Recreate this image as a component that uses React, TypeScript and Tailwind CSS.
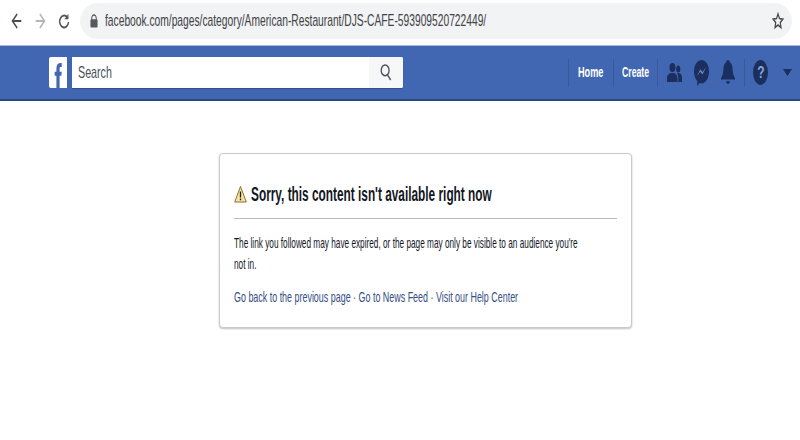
export default function App() {
  return (
    <div className="w-[800px] h-[440px] bg-white overflow-hidden font-['Liberation_Sans',sans-serif]">
      {/* browser bar */}
      <div className="h-[45px] flex items-center pl-[11px] pr-[8px] pb-[3px]">
        <svg width="11" height="16" viewBox="0 0 16 16" preserveAspectRatio="none" fill="none" stroke="#4a4d52" strokeWidth="1.8" className="shrink-0">
          <path d="M15 8H2M9 1L2 8l7 7" />
        </svg>
        <svg width="11" height="16" viewBox="0 0 16 16" preserveAspectRatio="none" fill="none" stroke="#b3b5b8" strokeWidth="1.8" className="shrink-0 ml-[13px]">
          <path d="M1 8h13M7 1l7 7-7 7" />
        </svg>
        <svg width="12" height="16" viewBox="0 0 16 16" preserveAspectRatio="none" fill="none" stroke="#55585c" strokeWidth="2" className="shrink-0 ml-[12px]">
          <path d="M13 5.2A5.9 5.9 0 1 0 14 9" />
          <path d="M13.6 1.500v4.600H9z" fill="#55585c" strokeWidth="0.5" />
        </svg>
        <div className="ml-[10px] flex-1 h-[36px] rounded-full bg-[#f1f3f4] flex items-center pl-[10px] pr-[8px]">
          <svg width="8" height="14" viewBox="0 0 9 12" preserveAspectRatio="none" className="shrink-0">
            <path d="M2 5V3.400a2.500 2.500 0 0 1 5 0V5" fill="none" stroke="#55585c" strokeWidth="1.200" />
            <rect x="0.5" y="4.600" width="8" height="7" rx="1" fill="#55585c" />
          </svg>
          <div className="ml-[7px] flex-1 min-w-0 text-[#3f4246] text-[17px] whitespace-nowrap origin-left scale-x-[0.603]">
            facebook.com/pages/category/American-Restaurant/DJS-CAFE-593909520722449/
          </div>
          <svg width="12" height="18" viewBox="0 0 24 24" preserveAspectRatio="none" fill="none" stroke="#45484c" strokeWidth="2.4" className="shrink-0">
            <path d="M12 2.500l2.900 6.200 6.700.8-5 4.600 1.400 6.700-6-3.400-6 3.400 1.400-6.700-5-4.600 6.700-.8z" />
          </svg>
        </div>
      </div>

      {/* facebook bar */}
      <div className="h-[56px] bg-[#4267b2] border-t border-t-[#a9bbdc] border-b-2 border-b-[#29487d] flex items-center">
        <div className="ml-[49px] w-[18px] h-[31px] bg-white rounded-l-[2px] flex items-end justify-center overflow-hidden">
          <svg width="8" height="26" viewBox="0 0 12 28" preserveAspectRatio="none">
            <path d="M3.600 28V14.800H1v-4.400h2.600V7.300C3.600 3.400 5.500 1 9.200 1H11.600v4.400h-1.500c-1.400 0-1.700.7-1.700 2v3h3.200l-.5 4.400H8.400V28z" fill="#4267b2" />
          </svg>
        </div>
        <div className="ml-[5px] w-[331px] h-[31px] bg-white rounded-r-[2px] flex shadow-[0_1px_1px_rgba(0,0,0,0.25)]">
          <div className="flex-1 flex items-center pl-[6px] text-[17px] text-[#4b4f56]">
            <span className="inline-block origin-left scale-x-[0.63]">Search</span>
          </div>
          <div className="w-[34px] bg-[#f6f7f9] flex items-center justify-center rounded-r-[2px]">
            <svg width="12" height="17" viewBox="0 0 14 16" preserveAspectRatio="none" fill="none" stroke="#4b4f56" strokeWidth="1.500">
              <ellipse cx="6" cy="6" rx="4.600" ry="5" />
              <path d="M9 10.500l3.500 4.500" />
            </svg>
          </div>
        </div>

        <div className="ml-[165px] w-px h-[28px] bg-[#39599c]" />
        <div className="w-[44px] pl-[9px] text-white font-bold text-[15px]">
          <span className="inline-block origin-left scale-x-[0.61]">Home</span>
        </div>
        <div className="w-px h-[28px] bg-[#39599c]" />
        <div className="w-[43px] pl-[8px] text-white font-bold text-[15px]">
          <span className="inline-block origin-left scale-x-[0.58]">Create</span>
        </div>
        <div className="w-px h-[28px] bg-[#39599c]" />

        <svg width="15" height="22" viewBox="0 0 18 22" preserveAspectRatio="none" className="ml-[9px] shrink-0" fill="#1a2f5e">
          <ellipse cx="6.500" cy="5.500" rx="3.600" ry="4.500" />
          <ellipse cx="13.500" cy="7" rx="2.500" ry="3.500" />
          <path d="M0 20v-4c0-3 2.500-5 6.500-5s6 2 6 5v4z" />
          <path d="M13.500 20v-5c0-1.500-.5-3-1.500-4 3-.6 6 1 6 4v5z" />
        </svg>
        <svg width="15" height="26" viewBox="0 3 16 17" preserveAspectRatio="none" className="ml-[12px] shrink-0">
          <path d="M8 3c4.400 0 8 3.300 8 7.700 0 4.300-3.600 7.600-8 7.600-.7 0-1.400-.1-2-.3L3.500 20v-3.200C1.400 15.400 0 13.200 0 10.700 0 6.300 3.600 3 8 3z" fill="#1a2f5e" />
          <path d="M3 13.500l4-4.500 2 2 4-3.500-4 5-2.200-2z" fill="#6f8fcc" />
        </svg>
        <svg width="14" height="25" viewBox="0 0 14 23" preserveAspectRatio="none" className="ml-[12px] shrink-0" fill="#1a2f5e">
          <path d="M7 0c1 0 1.500.7 1.500 1.500C11 3 11.500 6 11.600 9c.1 3 1 5.500 2.400 7.500V18H0v-1.500C1.400 14.500 2.300 12 2.400 9 2.500 6 3 3 5.500 1.500 5.500.7 6 0 7 0z" />
          <path d="M5 19.500h4c0 1.500-1 2.500-2 2.500s-2-1-2-2.500z" />
        </svg>
        <div className="ml-[9px] w-px h-[28px] bg-[#39599c]" />
        <div className="ml-[8px] w-[15px] h-[25px] rounded-[50%] bg-[#1a2f5e] text-[#8aa4d6] font-bold text-[16px] flex items-center justify-center shrink-0">
          <span className="inline-block scale-x-[0.75]">?</span>
        </div>
        <svg width="9" height="7" viewBox="0 0 10 7" preserveAspectRatio="none" className="ml-[15px] shrink-0" fill="#1a2f5e">
          <path d="M0 0h10L5 7z" />
        </svg>
      </div>

      {/* card */}
      <div className="mt-[52px] ml-[219px] w-[413px] h-[175px] bg-white border border-[#c9cacc] rounded-[4px] shadow-[0_1px_2px_rgba(0,0,0,0.25)] px-[14px]">
        <div className="mt-[30px] flex items-center h-[20px]">
          <svg width="13" height="18" viewBox="0 0 13 18" className="shrink-0">
            <path d="M6.500 1.500L12.300 17H.7z" fill="#f5e2a8" stroke="#8c7326" strokeWidth="1" strokeLinejoin="round" />
            <path d="M6.500 6.500v6M6.500 13.500v1.800" stroke="#222" strokeWidth="1.300" />
          </svg>
          <span className="ml-[4px] text-[20px] font-bold text-[#14171f] whitespace-nowrap inline-block origin-left scale-x-[0.592]">
            Sorry, this content isn't available right now
          </span>
        </div>
        <div className="mt-[14px] border-t border-[#b9bbbe]" />
        <p className="mt-[13px] text-[15px] leading-[21px] text-[#14171f] whitespace-nowrap origin-left scale-x-[0.55]">
          The link you followed may have expired, or the page may only be visible to an audience you're
          <br />
          not in.
        </p>
        <p className="mt-[12px] text-[15px] leading-[21px] text-[#354e85] whitespace-nowrap origin-left scale-x-[0.595]">
          Go back to the previous page · Go to News Feed · Visit our Help Center
        </p>
      </div>
    </div>
  );
}
